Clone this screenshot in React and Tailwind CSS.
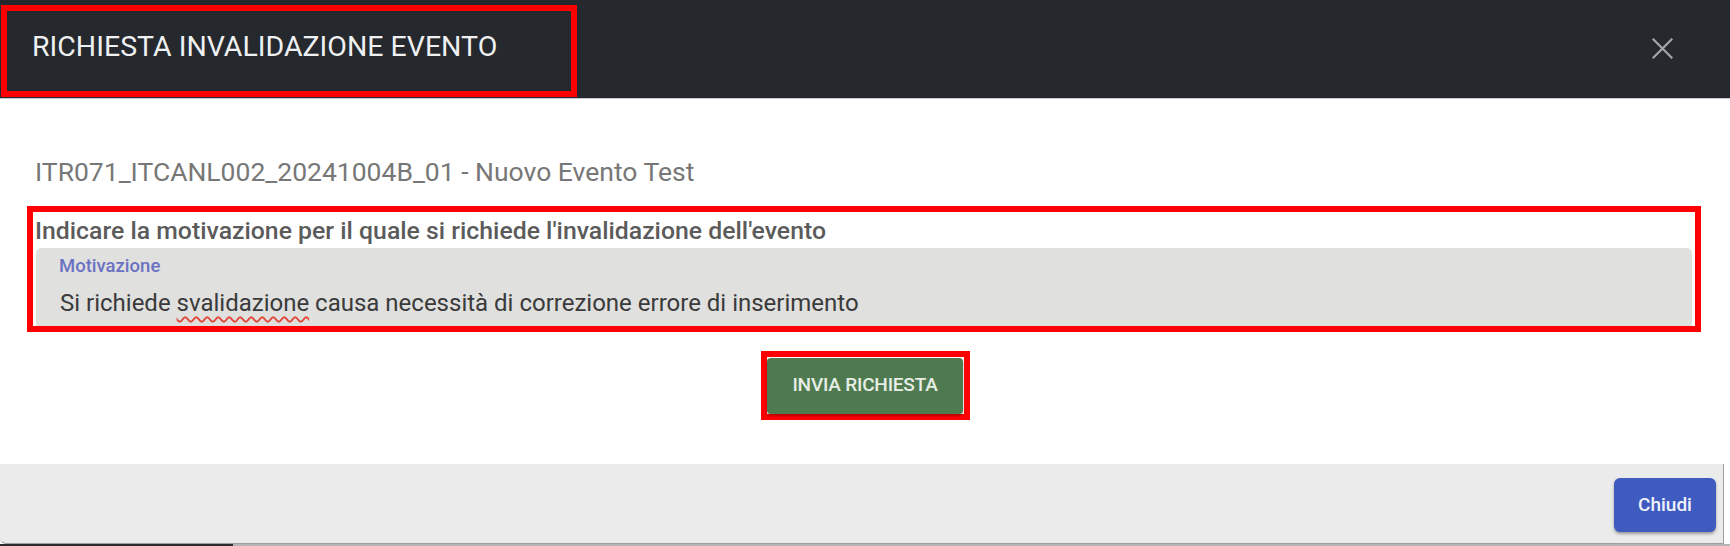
function CloseIcon() {
  return (
    <svg width="21" height="21" viewBox="0 0 21 21" fill="none">
      <path d="M1.5 1.5 L19.5 19.5 M19.5 1.5 L1.5 19.5" stroke="#a3a6ab" strokeWidth="2.2" strokeLinecap="square" />
    </svg>
  )
}

function App() {
  return (
    <div className="w-[1730px] h-[546px] bg-white flex flex-col font-['Roboto',sans-serif] overflow-hidden">
      {/* header */}
      <div className="h-[99px] shrink-0 bg-[#25282c] border-b border-[#c9c9c9] flex items-start justify-between">
        <div className="mt-[5px] ml-[1px] w-[576px] h-[92px] border-[6px] border-[#ff0000] pl-[25px] pt-[22px]">
          <h2 className="text-[28.5px] leading-[28px] text-[#eef0f2]">RICHIESTA INVALIDAZIONE EVENTO</h2>
        </div>
        <button className="mt-[38px] mr-[57px]">
          <CloseIcon />
        </button>
      </div>

      {/* body */}
      <div className="h-[365px] shrink-0 flex flex-col">
        <p className="mt-[60px] pl-[35px] text-[26.5px] leading-[26px] text-[#777777]">
          ITR071_ITCANL002_20241004B_01 - Nuovo Evento Test
        </p>

        <div className="mt-[21px] ml-[27px] w-[1674px] h-[126px] border-[6px] border-[#ff0000] flex flex-col">
          <p className="pt-[7px] pl-[2px] text-[24.8px] leading-[24px] font-medium text-[#5b5b5b]">
            Indicare la motivazione per il quale si richiede l'invalidazione dell'evento
          </p>
          <div className="mt-[5px] mx-[3px] h-[78px] bg-[#e0e0df] rounded-t-[5px] flex flex-col">
            <span className="pt-[10px] pl-[23px] text-[18.5px] leading-[17px] font-medium text-[#6b72c2]">Motivazione</span>
            <span className="mt-[16px] pl-[24px] text-[24px] leading-[24px] text-[#3a3a3a]">
              Si richiede{' '}
              <span className="underline decoration-wavy decoration-[#e0493a] decoration-[1.5px] underline-offset-[5px]">svalidazione</span>{' '}
              causa necessità di correzione errore di inserimento
            </span>
          </div>
        </div>

        <div className="mt-[19px] self-center border-[6px] border-[#ff0000] w-[209px] h-[69px] flex items-center justify-center">
          <button className="w-[196px] h-[56px] bg-[#4f7a50] rounded-[4px] shadow-[0_2px_3px_rgba(0,0,0,0.3)] text-[19px] font-medium text-[#e6eee6] tracking-[-0.2px]">
            INVIA RICHIESTA
          </button>
        </div>
      </div>

      {/* footer */}
      <div className="w-[1724px] h-[80px] shrink-0 bg-[#ebebeb] rounded-bl-[6px] border-r border-b border-[#a0a0a0] flex items-start justify-end pt-[14px] pr-[7px]">
        <button className="w-[102px] h-[54px] bg-[#3f5bbf] rounded-[6px] shadow-[0_2px_3px_rgba(0,0,0,0.35)] text-[19px] font-medium text-[#eef1fb]">
          Chiudi
        </button>
      </div>
      <div className="h-[2px] flex">
        <div className="w-[233px] bg-[#2a2a2a]"></div>
        <div className="flex-1 bg-[#b5b5b5]"></div>
      </div>
    </div>
  )
}

export default App;
